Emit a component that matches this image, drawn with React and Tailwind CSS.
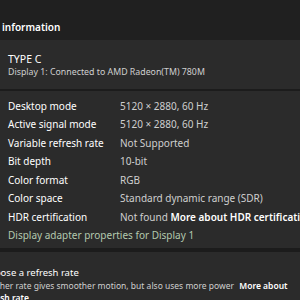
import React from "react";

const rows = [
  ["Desktop mode", "5120 × 2880, 60 Hz"],
  ["Active signal mode", "5120 × 2880, 60 Hz"],
  ["Variable refresh rate", "Not Supported"],
  ["Bit depth", "10-bit"],
  ["Color format", "RGB"],
  ["Color space", "Standard dynamic range (SDR)"],
];

export default function App() {
  return (
    <div
      className="w-[300px] h-[300px] overflow-hidden bg-[#202020] text-white flex flex-col"
      style={{ fontFamily: '"Segoe UI", "Noto Sans", sans-serif' }}
    >
      <div className="h-[40px] flex items-center pl-[2px] pt-[14px] shrink-0">
        <span className="text-[10px] font-semibold whitespace-nowrap">
          <span className="inline-block w-[60px] -ml-[60px] text-right pr-[3px]">Display</span>
          information
        </span>
      </div>
      <div className="h-[49px] bg-[#2b2b2b] px-[8px] pt-[3px] flex flex-col justify-center shrink-0">
        <div className="text-[10.5px] leading-[13px]">TYPE C</div>
        <div className="text-[8.8px] leading-[13px] text-[#cfcfcf] whitespace-nowrap">
          Display 1: Connected to AMD Radeon(TM) 780M
        </div>
      </div>
      <div className="h-[2px] bg-[#1c1c1c] shrink-0" />
      <div className="h-[157px] bg-[#2b2b2b] px-[8px] pt-[6px] shrink-0 flex flex-col">
        {rows.map(([k, v]) => (
          <div key={k} className="h-[18.5px] flex items-center text-[10px] whitespace-nowrap">
            <div className="w-[112px] shrink-0">{k}</div>
            <div className="text-[#cfcfcf] shrink-0">{v}</div>
          </div>
        ))}
        <div className="h-[18.5px] flex items-center text-[10px] whitespace-nowrap">
          <div className="w-[112px] shrink-0">HDR certification</div>
          <div className="text-[#cfcfcf] shrink-0">
            Not found <span className="font-semibold text-white">More about HDR certification</span>
          </div>
        </div>
        <div className="h-[18.5px] flex items-center text-[10px] whitespace-nowrap text-[#b3c9ae]">
          Display adapter properties for Display 1
        </div>
      </div>
      <div className="h-[4px] bg-[#1c1c1c] shrink-0" />
      <div className="flex-1 bg-[#2b2b2b] pt-[14px] whitespace-nowrap">
        <div className="-ml-[17px] text-[9.5px] leading-[14px]">Choose a refresh rate</div>
        <div className="-ml-[14px] text-[8.5px] leading-[12px] text-[#cfcfcf]">
          Higher rate gives smoother motion, but also uses more power{" "}
          <span className="font-semibold text-white ml-[3px]">More about</span>
        </div>
        <div className="-ml-[20px] text-[8.5px] leading-[12px] font-semibold">refresh rate</div>
      </div>
    </div>
  );
}
